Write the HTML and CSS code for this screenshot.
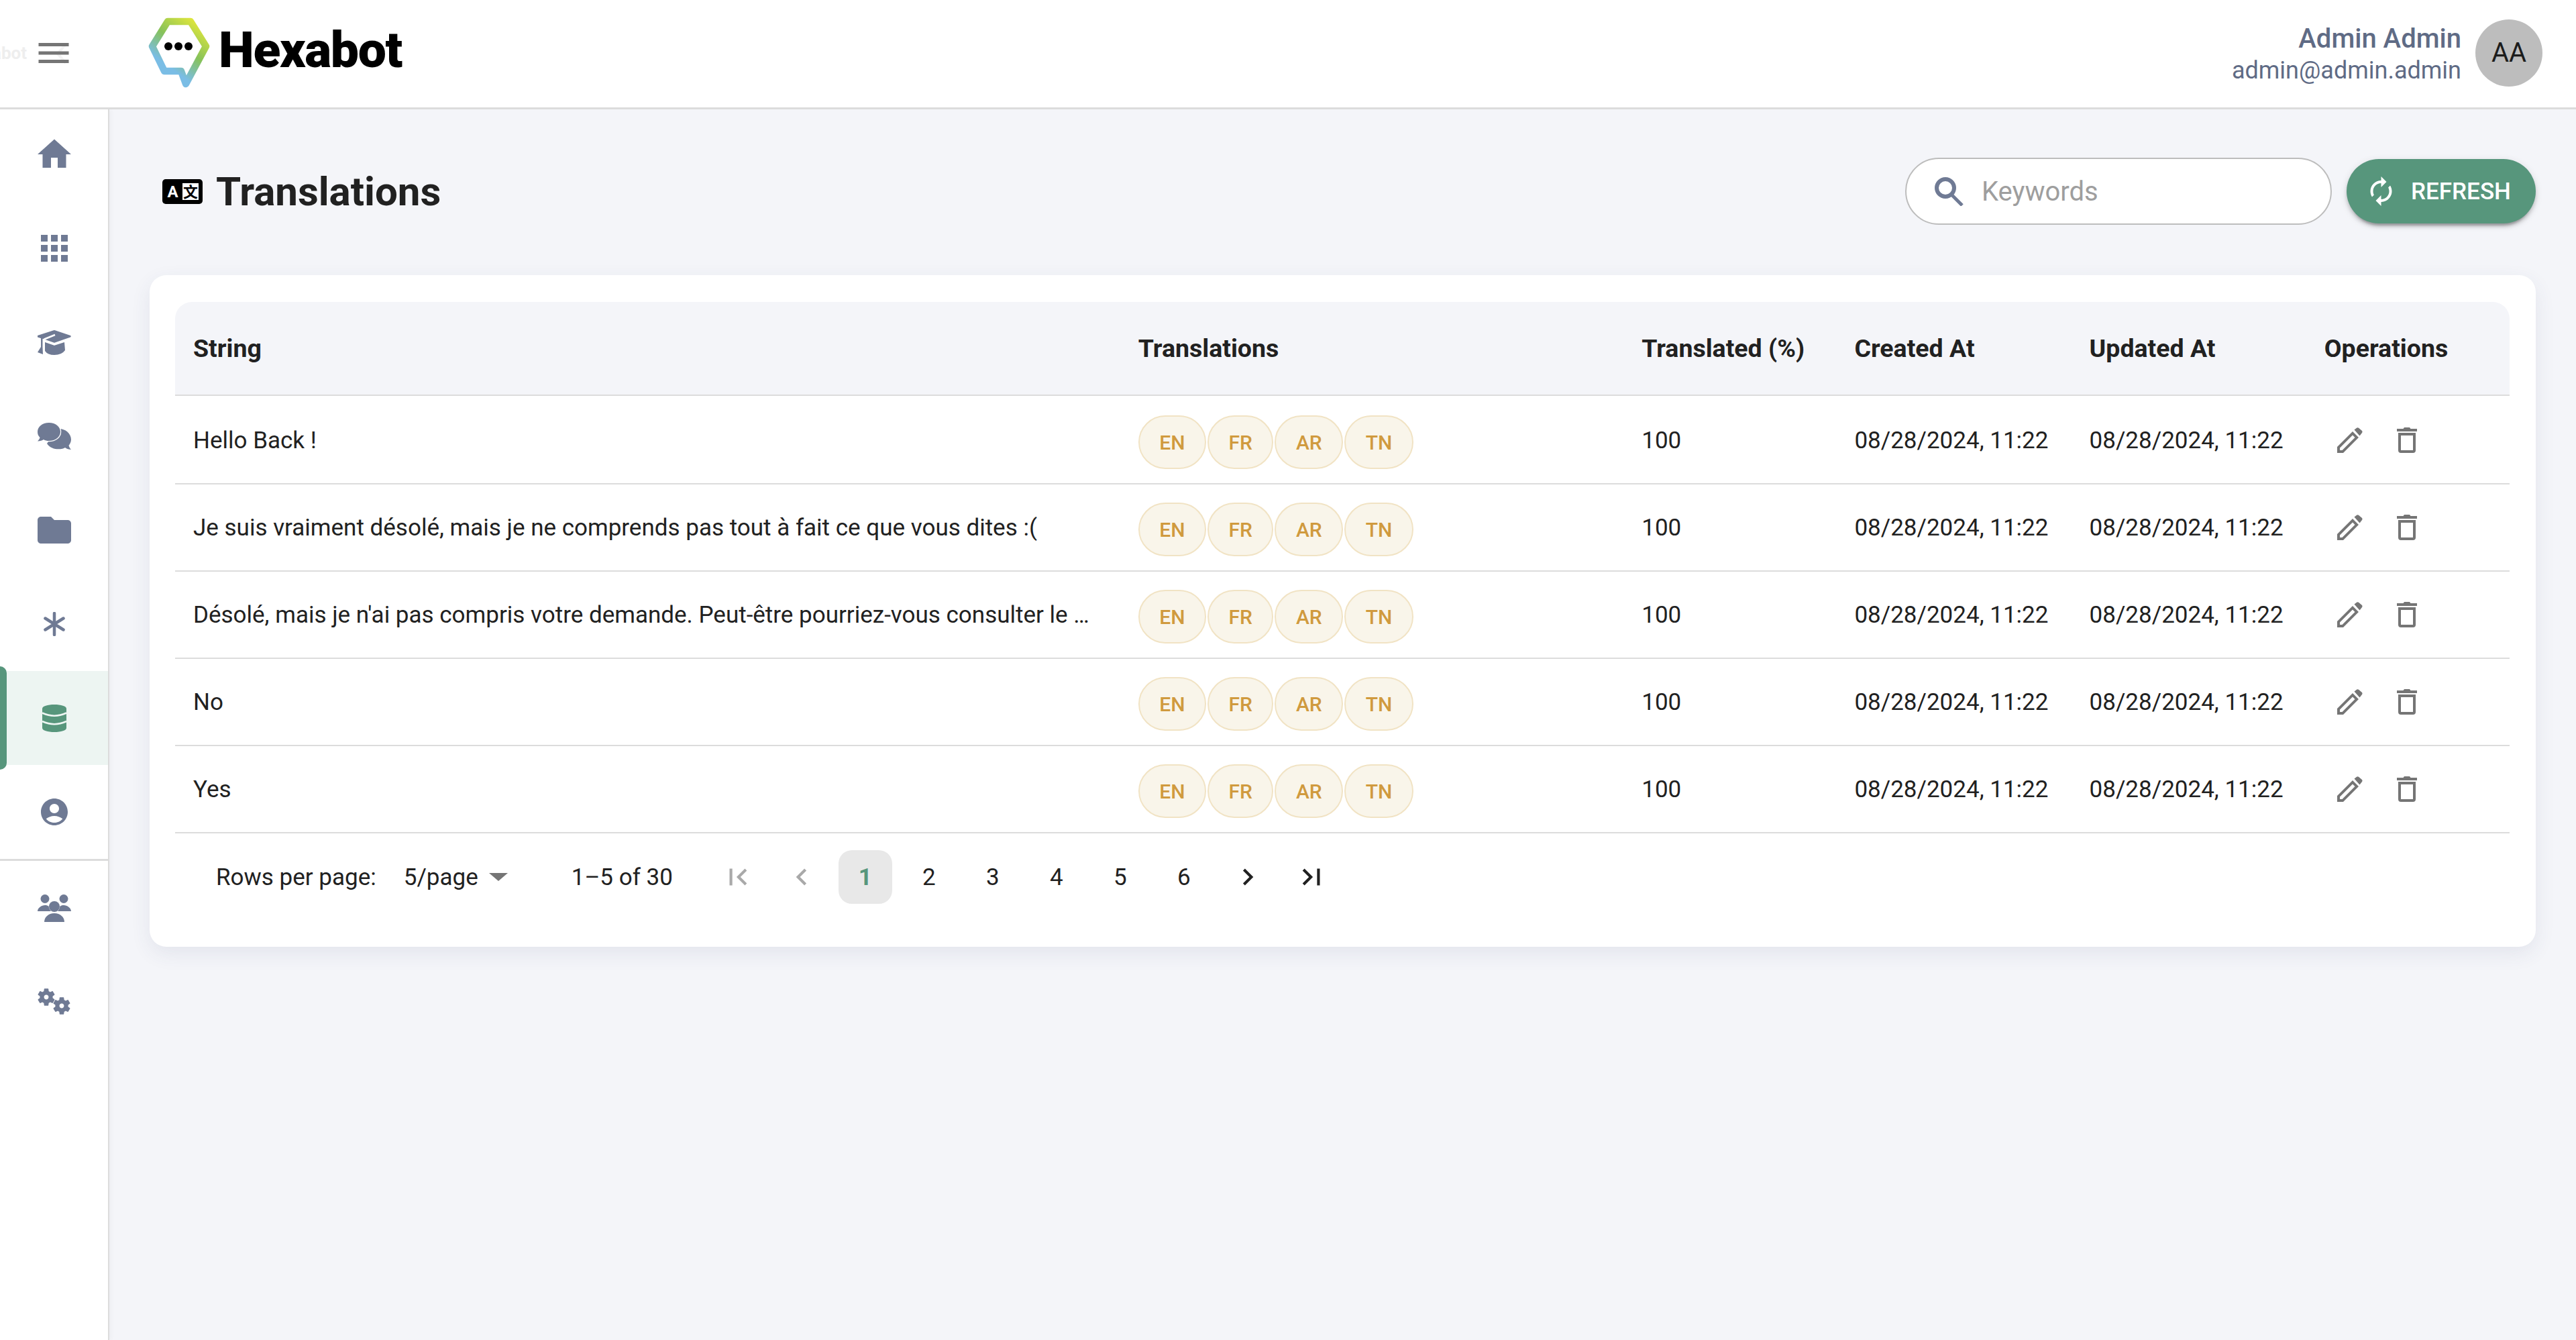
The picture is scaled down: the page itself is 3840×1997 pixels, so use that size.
FILE: index.html
```html
<!DOCTYPE html>
<html lang="en">
<head>
<meta charset="utf-8">
<title>Translations</title>
<link rel="stylesheet" href="styles.css">
</head>
<body>
<svg class="defs" width="0" height="0" aria-hidden="true">
  <defs>
    <symbol id="i-edit" viewBox="0 0 38 38"><path fill-rule="evenodd" d="M0 38V29L23 6l9 9L9 38Z M4 34h3.5L26.5 15 23 11.5 4 30.5Z"/><path d="M25.5 3.5 29 .7q1.5-1 3 0L37 5q1 1.5 0 3l-3.500 4.500Z"/></symbol>
    <symbol id="i-trash" viewBox="0 0 30 38"><path d="M0 2H9.500L11 0H19L20.500 2H30V6H0Z"/><path fill-rule="evenodd" d="M2 8H28V34a4 4 0 0 1-4 4H6a4 4 0 0 1-4-4Z M6 12V34H24V12Z"/></symbol>
    <symbol id="i-gear" viewBox="0 0 24 24"><path d="M19.140 12.940c.04-.3.06-.61.06-.94 0-.32-.02-.64-.07-.94l2.030-1.580c.18-.14.23-.41.12-.61l-1.920-3.320c-.12-.22-.37-.29-.59-.22l-2.390.96c-.5-.38-1.030-.7-1.620-.94l-.36-2.540c-.04-.24-.24-.41-.48-.41h-3.840c-.24 0-.43.17-.47.41l-.36 2.540c-.59.24-1.130.57-1.620.94l-2.390-.96c-.22-.08-.47 0-.59.22L2.740 8.870c-.12.21-.08.47.12.61l2.030 1.580c-.05.3-.09.63-.09.94s.02.64.07.94l-2.030 1.580c-.18.14-.23.41-.12.61l1.920 3.320c.12.22.37.29.59.22l2.390-.96c.5.38 1.030.7 1.620.94l.36 2.540c.05.24.24.41.48.41h3.840c.24 0 .44-.17.47-.41l.36-2.540c.59-.24 1.130-.56 1.620-.94l2.390.96c.22.08.47 0 .59-.22l1.920-3.320c.12-.22.07-.47-.12-.61l-2.010-1.580zM12 14.600c-1.430 0-2.600-1.170-2.600-2.600s1.170-2.600 2.600-2.600 2.600 1.170 2.600 2.600-1.170 2.600-2.600 2.600z"/></symbol>
    <linearGradient id="logo-grad" gradientUnits="userSpaceOnUse" x1="80" y1="8" x2="20" y2="90">
      <stop offset="0" stop-color="#e4e83a"/><stop offset=".45" stop-color="#86c25a"/><stop offset=".8" stop-color="#7abde5"/>
    </linearGradient>
  </defs>
</svg>

<header class="topbar">
  <span class="ghost-text">abot</span>
  <svg class="ghost-chevron" viewBox="0 0 16 32"><path d="M14 2 2 16l12 14"/></svg>
  <svg class="menu-icon" viewBox="0 0 24 24"><path d="M3 18h18v-2H3v2zm0-5h18v-2H3v2zm0-7v2h18V6H3z"/></svg>
  <svg class="logo-mark" viewBox="0 0 95 105">
    <path class="logo-hex" d="M30 6H64L87 43 57 99 50 80H25L7 43Z"/>
    <circle cx="31" cy="43" r="6"/><circle cx="46" cy="43" r="6"/><circle cx="61" cy="43" r="6"/>
  </svg>
  <span class="logo-text">Hexabot</span>
  <div class="user">
    <div class="user-text">
      <span class="user-name">Admin Admin</span>
      <span class="user-mail">admin@admin.admin</span>
    </div>
    <div class="avatar">AA</div>
  </div>
</header>

<div class="shell">
  <nav class="sidebar">
    <a class="nav-item"><svg class="w60" viewBox="0 0 24 24"><path d="M10 20v-6h4v6h5v-8h3L12 3 2 12h3v8z"/></svg></a>
    <a class="nav-item"><svg class="w60" viewBox="0 0 24 24"><path d="M4 8h4V4H4zm6 12h4v-4h-4zm-6 0h4v-4H4zm0-6h4v-4H4zm6 0h4v-4h-4zm6-10v4h4V4zm-6 4h4V4h-4zm6 6h4v-4h-4zm0 6h4v-4h-4z"/></svg></a>
    <a class="nav-item"><svg class="i-cap" viewBox="0 0 50 37"><path d="M24 .3q1-.4 2 0L49 8q1.500 1 0 2.500L26 18.500q-1 .4-2 0L11 14 0 10.500Q-1 9 0 8Z"/><path d="M11 18 24 22.500q1 .4 2 0L40 18l1 12q-5 7-16 7-10 0-14-6Z"/><path d="M5 12V25L0 33l8 3V25l-1-5q0-5 3-6.500L26 7" class="cap-line"/><path d="M5 12h2.500V25L8 36 0 33 5 25Z"/></svg></a>
    <a class="nav-item"><svg class="i-chat" viewBox="0 0 50 40"><path d="M30 9C40 8 50 15 50 25c0 4-2 7-3.500 9 .5 2 2 4.500 3.500 6-3 0-7-1-9-3-4 3-20 5-27-6Z"/><path class="chat-front" d="M17 0C27 0 34 6 34 13.500S27 27 17 27c-3 0-6-.5-8-2-2 1.500-5 2.500-9 2.500C2 25.500 3 24 3.500 22 1 19.500 0 17 0 13.500 0 6 7 0 17 0Z"/></svg></a>
    <a class="nav-item"><svg class="w60" viewBox="0 0 24 24"><path d="M10 4H4c-1.100 0-1.990.9-1.990 2L2 18c0 1.100.9 2 2 2h16c1.100 0 2-.9 2-2V8c0-1.100-.9-2-2-2h-8z"/></svg></a>
    <a class="nav-item"><svg class="i-star" viewBox="0 0 32 36"><path d="M16 2V34M2.500 9.500 29.500 26.500M29.500 9.500 2.500 26.500"/></svg></a>
    <a class="nav-item is-active"><svg class="i-db" viewBox="0 0 36 41"><path d="M18 0c10 0 18 2.500 18 6v29c0 3.500-8 6-18 6S0 38.500 0 35V6c0-3.500 8-6 18-6Z"/><path class="db-line" d="M0 12.500Q18 21 36 12.500M0 25Q18 33.500 36 25"/></svg></a>
    <a class="nav-item"><svg class="i-user" viewBox="2 2 20 20"><path d="M12 2C6.480 2 2 6.480 2 12s4.480 10 10 10 10-4.480 10-10S17.520 2 12 2zm0 4c1.930 0 3.500 1.570 3.500 3.500S13.930 13 12 13s-3.500-1.570-3.500-3.500S10.070 6 12 6zm0 14c-2.030 0-4.430-.82-6.140-2.880C7.550 15.800 9.680 15 12 15s4.450.8 6.140 2.120C16.430 19.180 14.030 20 12 20z"/></svg></a>
    <div class="nav-divider"></div>
    <a class="nav-item"><svg class="i-group" viewBox="0 0 50 41"><circle cx="11" cy="6.500" r="6.500"/><circle cx="39" cy="6.500" r="6.500"/><circle cx="25" cy="18" r="8"/><path d="M0 25c0-5 6-9 11-9 2.500 0 4.500.6 5.500 1.500C17 21 19 24 20 25Z"/><path d="M50 25c0-5-6-9-11-9-2.500 0-4.500.6-5.500 1.500C33 21 31 24 30 25Z"/><path d="M10 41c0-7 6-13 15-13s15 6 15 13Z"/></svg></a>
    <a class="nav-item"><svg class="i-gears" viewBox="0 0 50 40"><use href="#i-gear" x="-3" y="-3" width="32" height="32"/><use href="#i-gear" x="20" y="10" width="32" height="32"/></svg></a>
  </nav>

  <main class="content">
    <div class="title-row">
      <div class="title">
        <svg class="title-icon" viewBox="0 0 60 37">
          <rect width="60" height="37" rx="5"/>
          <rect class="ti-sheet" x="30" y="6" width="24" height="25"/>
          <text class="ti-a" x="15.500" y="27">A</text>
          <text class="ti-b" x="42" y="27">文</text>
        </svg>
        <h1>Translations</h1>
      </div>
      <div class="tools">
        <div class="search">
          <svg class="search-icon" viewBox="0 0 44 44"><circle cx="17" cy="17" r="13"/><path d="M26 27 42 43"/></svg>
          <span class="placeholder">Keywords</span>
        </div>
        <button class="refresh">
          <svg class="refresh-icon" viewBox="4 1 16 22"><path d="M12 6v3l4-4-4-4v3c-4.420 0-8 3.580-8 8 0 1.570.46 3.030 1.240 4.260L6.700 14.800c-.45-.83-.7-1.790-.7-2.800 0-3.310 2.690-6 6-6zm6.760 1.740L17.300 9.200c.44.84.7 1.790.7 2.800 0 3.310-2.690 6-6 6v-3l-4 4 4 4v-3c4.420 0 8-3.580 8-8 0-1.570-.46-3.030-1.240-4.260z"/></svg>
          REFRESH
        </button>
      </div>
    </div>

    <section class="card">
      <table class="grid">
        <colgroup><col class="c-string"><col class="c-trans"><col class="c-pct"><col class="c-date"><col class="c-date"><col class="c-ops"></colgroup>
        <thead>
          <tr><th>String</th><th>Translations</th><th>Translated (%)</th><th>Created At</th><th>Updated At</th><th>Operations</th></tr>
        </thead>
        <tbody>
          <tr>
            <td>Hello Back !</td>
            <td><div class="chips"><span class="chip">EN</span><span class="chip">FR</span><span class="chip">AR</span><span class="chip">TN</span></div></td>
            <td>100</td><td>08/28/2024, 11:22</td><td>08/28/2024, 11:22</td>
            <td><div class="ops"><svg class="i-edit"><use href="#i-edit"/></svg><svg class="i-trash"><use href="#i-trash"/></svg></div></td>
          </tr>
          <tr>
            <td>Je suis vraiment désolé, mais je ne comprends pas tout à fait ce que vous dites :(</td>
            <td><div class="chips"><span class="chip">EN</span><span class="chip">FR</span><span class="chip">AR</span><span class="chip">TN</span></div></td>
            <td>100</td><td>08/28/2024, 11:22</td><td>08/28/2024, 11:22</td>
            <td><div class="ops"><svg class="i-edit"><use href="#i-edit"/></svg><svg class="i-trash"><use href="#i-trash"/></svg></div></td>
          </tr>
          <tr>
            <td>Désolé, mais je n'ai pas compris votre demande. Peut-être pourriez-vous consulter le …</td>
            <td><div class="chips"><span class="chip">EN</span><span class="chip">FR</span><span class="chip">AR</span><span class="chip">TN</span></div></td>
            <td>100</td><td>08/28/2024, 11:22</td><td>08/28/2024, 11:22</td>
            <td><div class="ops"><svg class="i-edit"><use href="#i-edit"/></svg><svg class="i-trash"><use href="#i-trash"/></svg></div></td>
          </tr>
          <tr>
            <td>No</td>
            <td><div class="chips"><span class="chip">EN</span><span class="chip">FR</span><span class="chip">AR</span><span class="chip">TN</span></div></td>
            <td>100</td><td>08/28/2024, 11:22</td><td>08/28/2024, 11:22</td>
            <td><div class="ops"><svg class="i-edit"><use href="#i-edit"/></svg><svg class="i-trash"><use href="#i-trash"/></svg></div></td>
          </tr>
          <tr>
            <td>Yes</td>
            <td><div class="chips"><span class="chip">EN</span><span class="chip">FR</span><span class="chip">AR</span><span class="chip">TN</span></div></td>
            <td>100</td><td>08/28/2024, 11:22</td><td>08/28/2024, 11:22</td>
            <td><div class="ops"><svg class="i-edit"><use href="#i-edit"/></svg><svg class="i-trash"><use href="#i-trash"/></svg></div></td>
          </tr>
        </tbody>
      </table>
      <div class="pager">
        <span class="pager-label">Rows per page:</span>
        <span class="pager-select">5/page<svg class="caret" viewBox="0 0 28 12"><path d="M0 0H28L14 12Z"/></svg></span>
        <span class="pager-range">1–5 of 30</span>
        <div class="pages">
          <span class="page is-off"><svg viewBox="0 0 24 24"><path d="M18.410 16.590L13.820 12l4.590-4.590L17 6l-6 6 6 6zM6 6h2v12H6z"/></svg></span>
          <span class="page is-off"><svg viewBox="0 0 24 24"><path d="M15.410 7.410L14 6l-6 6 6 6 1.410-1.410L10.830 12z"/></svg></span>
          <span class="page is-current">1</span>
          <span class="page">2</span>
          <span class="page">3</span>
          <span class="page">4</span>
          <span class="page">5</span>
          <span class="page">6</span>
          <span class="page"><svg viewBox="0 0 24 24"><path d="M10 6L8.590 7.410 13.170 12l-4.580 4.590L10 18l6-6z"/></svg></span>
          <span class="page"><svg viewBox="0 0 24 24"><path d="M5.590 7.410L10.180 12l-4.590 4.590L7 18l6-6-6-6zM16 6h2v12h-2z"/></svg></span>
        </div>
      </div>
    </section>
  </main>
</div>
</body>
</html>
```
FILE: styles.css
```css
* { box-sizing: border-box; }
html, body { margin: 0; height: 100%; overflow: hidden; }
body {
  font-family: Roboto, "Liberation Sans", sans-serif;
  font-size: 35px;
  color: #212121;
  background: #f4f5f9;
}
.defs { position: absolute; }

/* top bar */
.topbar {
  position: relative;
  display: flex;
  align-items: center;
  height: 163px;
  padding: 0 50px 3px;
  background: #fff;
  border-bottom: 3px solid #dcdcdc;
}
.ghost-text {
  position: absolute;
  right: calc(100% - 40px);
  top: 64px;
  font-size: 26px;
  font-weight: 700;
  line-height: 30px;
  color: #eeeeee;
}
.ghost-chevron {
  position: absolute;
  left: 84px;
  top: 64px;
  width: 16px;
  height: 32px;
  fill: none;
  stroke: #f3f3f3;
  stroke-width: 4;
}
.menu-icon { position: relative; width: 60px; height: 60px; fill: #757575; flex: none; }
.logo-mark { width: 95px; height: 105px; margin-left: 110px; flex: none; fill: #000; }
.logo-hex { fill: none; stroke: url(#logo-grad); stroke-width: 10.500; stroke-linejoin: round; }
.logo-text {
  margin-left: 11px;
  margin-bottom: 9px;
  font-size: 75px;
  line-height: 1;
  font-weight: 900;
  letter-spacing: -1.300px;
  color: #000;
}
.user { margin-left: auto; display: flex; align-items: center; gap: 21px; }
.user-text { display: flex; flex-direction: column; align-items: flex-end; padding-top: 3px; }
.user-name { font-size: 40px; line-height: 50px; font-weight: 500; color: #5f6b85; }
.user-mail { font-size: 36px; line-height: 44px; color: #5f6b85; }
.avatar {
  width: 100px;
  height: 100px;
  border-radius: 50%;
  background: #bdbdbd;
  display: flex;
  align-items: center;
  justify-content: center;
  font-size: 40px;
  color: #1c1c1c;
}

/* shell */
.shell { display: flex; height: calc(100% - 163px); }
.sidebar {
  width: 163px;
  flex: none;
  background: #fff;
  border-right: 2px solid #dcdcdc;
  box-shadow: 3px 0 6px rgba(0, 0, 0, .03);
}
.nav-item {
  position: relative;
  height: 140px;
  display: flex;
  align-items: center;
  justify-content: center;
}
.nav-item svg { fill: #6f7a94; flex: none; }
.nav-item:first-child { margin-top: -3px; }
.w60 { width: 60px; height: 60px; }
.i-cap { width: 50px; height: 37px; }
.cap-line { fill: none; stroke: #fff; stroke-width: 2.500; }
.i-chat { width: 50px; height: 40px; }
.chat-front { stroke: #fff; stroke-width: 2.500; paint-order: stroke; }
.nav-item .i-star { width: 32px; height: 36px; fill: none; stroke: #6f7a94; stroke-width: 4.500; stroke-linecap: round; }
.i-db { width: 36px; height: 41px; }
.nav-item.is-active { background: #edf5f2; }
.nav-item.is-active::before {
  content: "";
  position: absolute;
  left: 0;
  top: -7px;
  bottom: -7px;
  width: 10px;
  background: #57967c;
  border-radius: 0 10px 10px 0;
}
.nav-item.is-active svg { fill: #57967c; }
.db-line { fill: none; stroke: #edf5f2; stroke-width: 2.500; }
.i-user { width: 40px; height: 40px; }
.nav-divider { height: 3px; background: #dcdcdc; }
.i-group { width: 50px; height: 41px; }
.i-gears { width: 50px; height: 40px; }

/* content */
.content { flex: 1; padding: 72px 60px 0 60px; min-width: 0; }
.title-row { display: flex; align-items: center; justify-content: space-between; height: 100px; }
.title { display: flex; align-items: center; padding-left: 19px; gap: 20px; }
.title-icon { width: 60px; height: 37px; fill: #000; }
.ti-sheet { fill: #fff; }
.ti-a { fill: #fff; font-size: 24px; font-weight: 700; text-anchor: middle; }
.ti-b { fill: #000; font-size: 22px; font-weight: 700; text-anchor: middle; font-family: "Noto Sans CJK SC", sans-serif; }
h1 { margin: 0; padding-top: 1px; font-size: 60px; line-height: 80px; font-weight: 700; color: #212121; }
.tools { display: flex; align-items: center; gap: 22px; }
.search {
  display: flex;
  align-items: center;
  width: 636px;
  height: 100px;
  padding-left: 41px;
  background: #fff;
  border: 2.500px solid #bdbdbd;
  border-radius: 50px;
}
.search-icon { width: 44px; height: 44px; fill: none; stroke: #6f7a94; stroke-width: 6; }
.search-icon path { stroke-width: 5; }
.placeholder { margin-left: 27px; font-size: 40px; color: #9e9e9e; }
.refresh {
  display: flex;
  align-items: center;
  width: 282px;
  height: 96px;
  padding: 0 0 0 35px;
  border: 0;
  border-radius: 48px;
  background: #57967c;
  color: #fff;
  font: 500 35px Roboto, sans-serif;
  box-shadow: 0 8px 3px -5px rgba(0,0,0,.2), 0 5px 5px 0 rgba(0,0,0,.14), 0 3px 12px 0 rgba(0,0,0,.12);
}
.refresh-icon { width: 33px; height: 44px; fill: #fff; margin-right: 28px; }

/* card + table */
.card {
  margin-top: 75px;
  padding: 40px 39px 64px 38px;
  background: #fff;
  border-radius: 25px;
  box-shadow: 0 10px 30px rgba(60, 70, 110, .09);
}
.grid { width: 100%; table-layout: fixed; border-collapse: separate; border-spacing: 0; }
.c-string { width: 1409px; }
.c-trans { width: 750px; }
.c-pct { width: 317px; }
.c-date { width: 350px; }
.c-ops { width: 302px; }
th, td { padding: 0 0 0 26px; text-align: left; white-space: nowrap; overflow: hidden; border-bottom: 2px solid #dcdcdc; }
th:first-child, td:first-child { padding-left: 27px; }
th { height: 140px; background: #f4f5f9; font-size: 37.500px; font-weight: 700; color: #212121; }
th:first-child { border-top-left-radius: 25px; }
th:last-child { border-top-right-radius: 25px; }
td { height: 130px; }
tbody tr:first-child td { height: 132px; padding-top: 2px; }
.chips { display: flex; gap: 2px; margin-top: 6px; }
.chip {
  display: inline-flex;
  align-items: center;
  height: 80px;
  padding: 0 29.500px;
  border: 2.500px solid #f1e3c4;
  border-radius: 40px;
  background: #f9f5ea;
  color: #d09a3e;
  font-size: 30px;
  font-weight: 500;
}
.ops { display: flex; align-items: center; padding-left: 19px; gap: 47px; fill: #757575; }
.i-edit { width: 38px; height: 38px; }
.i-trash { width: 30px; height: 38px; margin-left: 4px; }

/* pagination */
.pager { display: flex; align-items: center; height: 80px; margin-top: 25px; padding-left: 61px; }
.pager-select { display: flex; align-items: center; margin-left: 41px; }
.caret { width: 28px; height: 12px; margin-left: 16px; fill: #757575; }
.pager-range { margin-left: 95px; }
.pages { display: flex; gap: 15px; margin-left: 57px; }
.page {
  width: 80px;
  height: 80px;
  border-radius: 20px;
  display: flex;
  align-items: center;
  justify-content: center;
  fill: #212121;
}
.page svg { width: 50px; height: 50px; }
.page.is-off { fill: #a9a9a9; }
.page.is-current { background: #e8e8e8; color: #57967c; font-weight: 700; }
```
